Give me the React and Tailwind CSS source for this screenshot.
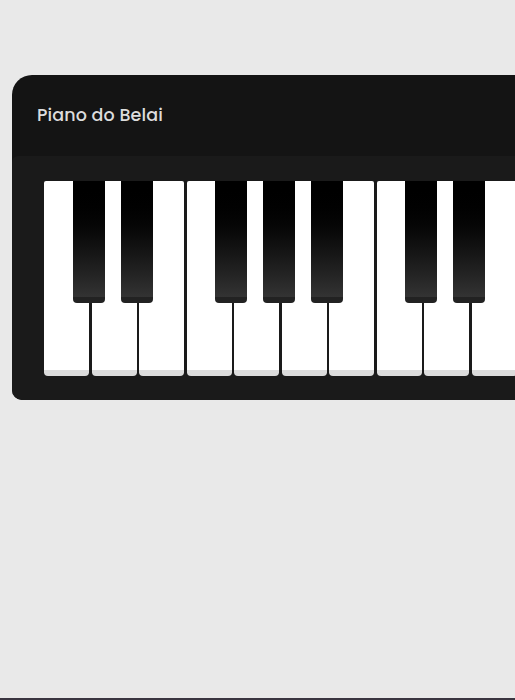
import React from "react";

const whites = Array.from({ length: 14 });
const blacks = [29, 77, 171, 219, 267, 361, 409, 504, 552];

export default function App() {
  return (
    <div className="h-[700px] w-full overflow-hidden bg-[#e9e9e9] border-b-2 border-[#3a3540] pt-[75px] pl-[12px]">
      <div className="w-[800px] rounded-tl-[20px] rounded-bl-[10px] bg-[#141414] overflow-hidden">
        <div className="h-[81px] flex items-center pl-[25px]">
          <span
            className="text-[17.5px] font-medium text-[#dcdcdc] tracking-[0.1px]"
            style={{ fontFamily: "Poppins, Lato, 'Noto Sans', sans-serif" }}
          >
            Piano do Belai
          </span>
        </div>
        <div className="bg-[#1a1a1a] rounded-tl-[6px] pt-[25px] pb-[24px] pl-[32px]">
          <div className="relative flex gap-[2.5px]">
            {whites.map((_, i) => (
              <div
                key={i}
                className="w-[45px] h-[195px] shrink-0 bg-white rounded-b-[4px] rounded-t-[2px] border-b-[6px] border-[#dcdcdc]"
              />
            ))}
            {blacks.map((l, i) => (
              <div
                key={i}
                className="absolute top-0 w-[32px] h-[122px] rounded-b-[4px] bg-gradient-to-b from-[#000000] to-[#333333] border-b-[6px] border-[#222222]"
                style={{ left: l }}
              />
            ))}
          </div>
        </div>
      </div>
    </div>
  );
}
